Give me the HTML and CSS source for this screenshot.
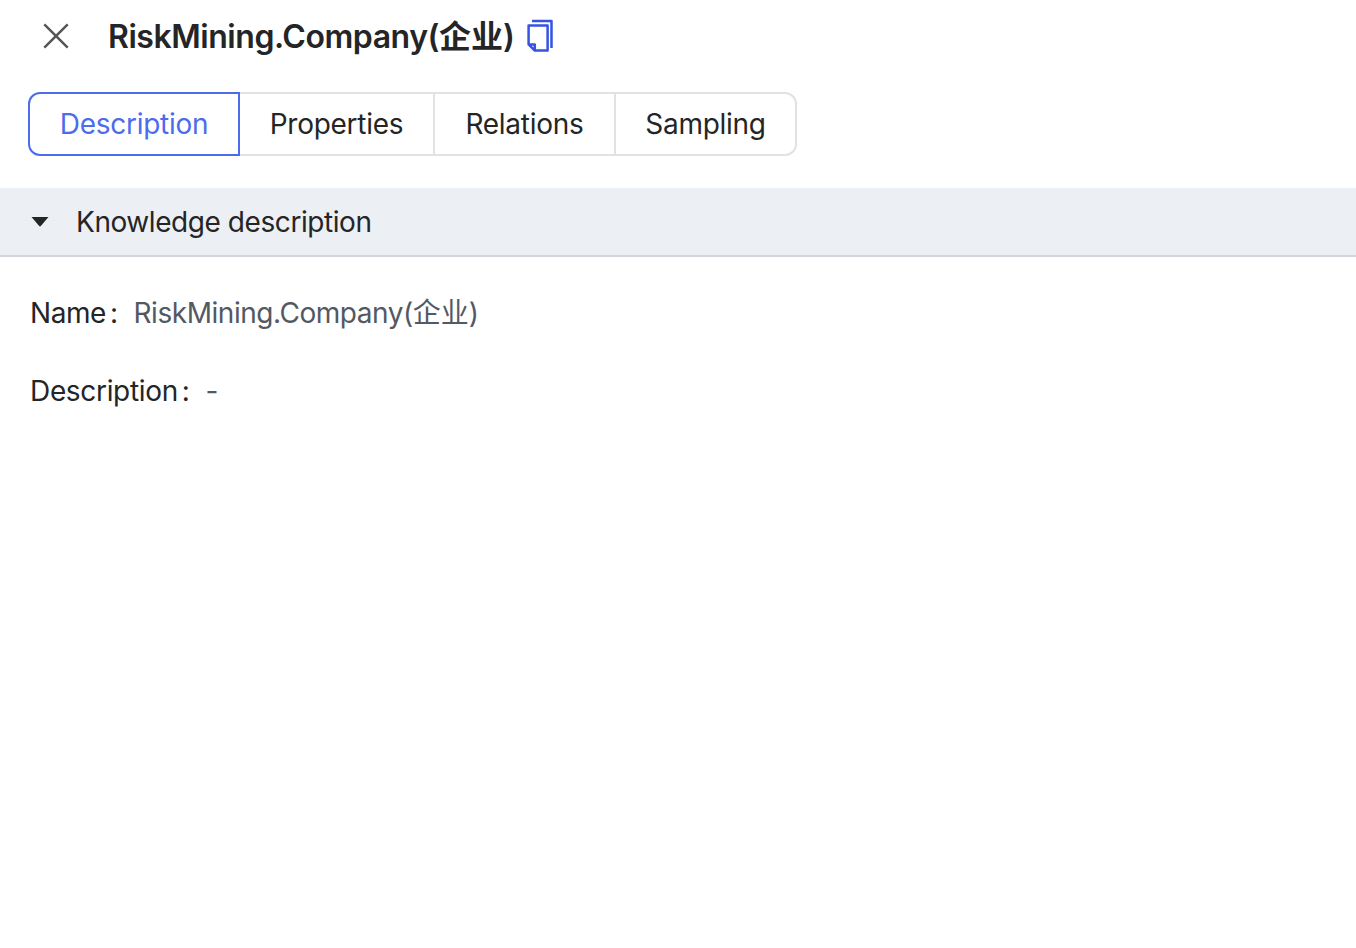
FILE: index.html
```html
<!DOCTYPE html>
<html lang="en">
<head>
<meta charset="utf-8">
<title>RiskMining.Company</title>
<link rel="stylesheet" href="styles.css">
</head>
<body>
<header class="header">
  <svg class="close" viewBox="0 0 28 28"><path d="M2.3 2.3 25.7 25.7M25.7 2.3 2.3 25.7"/></svg>
  <h1 class="title">RiskMining.Company(<span class="cjk">企业</span>)</h1>
  <svg class="copy" viewBox="0 0 28 34"><path d="M6 2H25.5V29M2.6 6.5H21.6V31.6H8.8L2.6 25.4ZM2.6 25.4H8.8V31.6"/></svg>
</header>
<nav class="tabs">
  <button class="tab tab-description active">Description</button>
  <button class="tab tab-properties">Properties</button>
  <button class="tab tab-relations">Relations</button>
  <button class="tab tab-sampling">Sampling</button>
</nav>
<section>
  <div class="section-head">
    <svg class="caret" viewBox="0 0 18 12"><path d="M.5 1H17.5L10 9.8Q9 11 8 9.8Z"/></svg>
    <span class="section-title">Knowledge description</span>
  </div>
  <dl class="fields">
    <div class="field"><dt>Name<span class="colon">:</span></dt><dd>RiskMining.Company(<span class="cjk">企业</span>)</dd></div>
    <div class="field"><dt class="desc-label">Description<span class="colon">:</span></dt><dd>-</dd></div>
  </dl>
</section>
</body>
</html>
```
FILE: styles.css
```css
body {
  margin: 0;
  background: #fff;
  color: #242526;
  font: 28px/44px Inter, "Noto Sans CJK SC", sans-serif;
}
.header { display: flex; align-items: center; height: 72px; padding-left: 42px; }
.close { width: 28px; height: 28px; fill: none; stroke: #555; stroke-width: 2.5; }
.title { width: 406px; margin: 2px 0 0 38px; font-size: 32px; font-weight: 600; line-height: 48px; letter-spacing: -0.45px; white-space: nowrap; }
.title .cjk { letter-spacing: 0; }
.copy { width: 28px; height: 34px; margin-left: 12px; fill: none; stroke: #3654e3; stroke-width: 2.5; stroke-linejoin: round; }
.tabs { display: flex; margin: 20px 0 32px 28px; }
.tab {
  box-sizing: border-box;
  height: 64px;
  padding: 0;
  border: 2px solid #e2e2e2;
  border-left-width: 0;
  background: #fff;
  color: inherit;
  font: inherit;
  letter-spacing: -0.28px;
}
.tab-description { width: 212px; border-radius: 12px 0 0 12px; }
.tab-properties { width: 195px; }
.tab-relations { width: 181px; }
.tab-sampling { width: 181px; border-radius: 0 12px 12px 0; }
.active { border: 2px solid #4d6bed; color: #4d6bed; }
.section-head {
  display: flex;
  align-items: center;
  box-sizing: border-box;
  height: 69px;
  padding-left: 31px;
  border-bottom: 2px solid #d2d5da;
  background: #eceff4;
}
.caret { width: 18px; height: 12px; fill: #242526; }
.section-title { margin-left: 27px; padding-top: 1px; letter-spacing: -0.43px; }
.fields { display: flex; flex-direction: column; gap: 34px; margin: 34px 0 0 30px; letter-spacing: -0.45px; }
.field { display: flex; }
dt { display: flex; }
dd { margin: 0 0 0 16px; color: #535963; letter-spacing: -0.45px; }
dd .cjk { letter-spacing: 0; }
.colon { margin-left: 4px; }
.desc-label { letter-spacing: -0.33px; }
```
